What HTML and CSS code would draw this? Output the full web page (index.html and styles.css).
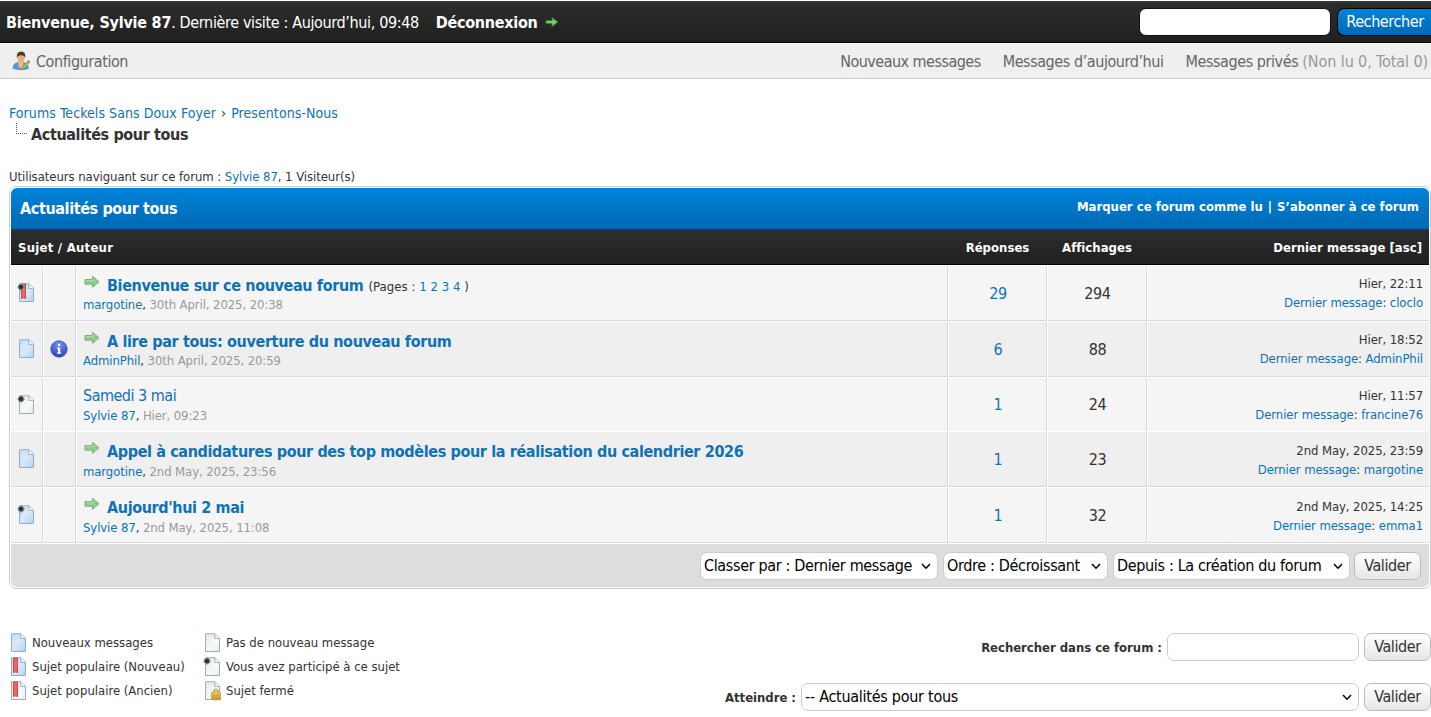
FILE: index.html
```
<!DOCTYPE html>
<html lang="fr">
<head>
<meta charset="utf-8">
<title>Actualités pour tous</title>
<link rel="stylesheet" href="styles.css">
</head>
<body>
<svg class="defs" width="0" height="0">
  <defs>
    <linearGradient id="gb" x1="0" y1="0" x2="1" y2="1"><stop offset="0" stop-color="#c3dbf5"/><stop offset=".5" stop-color="#d9e9f9"/><stop offset="1" stop-color="#b4d2ef"/></linearGradient>
    <linearGradient id="gw" x1="0" y1="0" x2="1" y2="1"><stop offset="0" stop-color="#dfe8e9"/><stop offset=".6" stop-color="#f8fbfb"/><stop offset="1" stop-color="#e3ebea"/></linearGradient>
    <radialGradient id="gi" cx=".5" cy=".2" r=".8"><stop offset="0" stop-color="#7b93ec"/><stop offset="1" stop-color="#2343bd"/></radialGradient>
    <linearGradient id="gl" x1="0" y1="0" x2="0" y2="1"><stop offset="0" stop-color="#f3cf6a"/><stop offset="1" stop-color="#cf9729"/></linearGradient>
    <symbol id="page" viewBox="0 0 18 20"><path d="M2.500 .8H12L16.500 5.200V18.500H2.500Z" stroke-width="1"/><path d="M11.800 1V5.400H16.300" stroke-width="1" fill="#fff"/></symbol>
    <symbol id="mark" viewBox="0 0 18 20"><path d="M4.500 1H8.500V15.500L6.500 14.800L4.500 15.500Z" fill="#e86a68" stroke="#cf4548"/></symbol>
    <symbol id="dot" viewBox="0 0 18 20"><circle cx="4" cy="4" r="2.900" fill="#333"/><path d="M4 .3V7.700M.3 4H7.700" stroke="#333" stroke-opacity=".45"/></symbol>
    <symbol id="lock" viewBox="0 0 18 20"><path d="M11 12V10.500Q11 8.500 13 8.500T15 10.500V12" fill="none" stroke="#c79a3e" stroke-width="1.300"/><rect x="8.500" y="11" width="9.200" height="7.800" rx=".6" fill="url(#gl)" stroke="#c08f32" stroke-width=".7"/><path d="M10 14H17M10 16.300H17" stroke="#b88a35" stroke-width=".6"/></symbol>
    <symbol id="arrow" viewBox="0 0 16 14"><path d="M1 4.500H8.500V1.300L15 6.800L8.500 12.300V9.200H1Z" fill="#92ca91" stroke="#70aa73" stroke-width=".9" stroke-linejoin="round"/><path d="M2 5.600H9.500V3.500" fill="none" stroke="#b5deb2"/></symbol>
  </defs>
</svg>

<header class="topbar">
  <div class="welcome"><b>Bienvenue, Sylvie 87</b><span class="visit">. Dernière visite : Aujourd’hui, 09:48</span><b class="logout">Déconnexion</b><svg class="go" viewBox="0 0 14 12"><path d="M1 4.500H7V1.500L13 6L7 10.500V7.500H1Z" fill="#7cc86b" stroke="#2f7a37"/></svg></div>
  <div class="quick"><input class="field dark" type="text" aria-label="Recherche"><button class="btn blue">Rechercher</button></div>
</header>
<nav class="panel">
  <svg class="user" viewBox="0 0 18 20"><path d="M.5 17.500Q.5 12 5.500 11.500H11Q15 12 16 17.500Q9 20 .5 17.500Z" fill="#6296d8" stroke="#4779b9" stroke-width=".6"/><path d="M6 10.500H11L10.500 15L8.500 18L6 14.500Z" fill="#edbb7c"/><ellipse cx="8.500" cy="7" rx="3.700" ry="4.700" fill="#e7b073"/><path d="M4.300 7Q3.800 .6 8.600 .6T12.800 7L11.500 5Q8.500 3.500 5.700 5Z" fill="#4d3830"/><path d="M15.700 9.500L17.400 11L11.500 18L9.300 18.700L9.800 16.500Z" fill="#a8cb51" stroke="#68883a" stroke-width=".6"/><path d="M15.700 9.300L17.500 10.900L16.500 12L14.700 10.500Z" fill="#db665a"/></svg>
  <span class="config">Configuration</span>
  <div class="links"><span class="fresh">Nouveaux messages</span><span>Messages d’aujourd’hui</span><span>Messages privés <i>(Non lu 0, Total 0)</i></span></div>
</nav>

<main>
  <div class="crumbs"><a>Forums Teckels Sans Doux Foyer</a><span>›</span><a>Presentons-Nous</a></div>
  <div class="current"><span class="branch"></span>Actualités pour tous</div>
  <div class="online">Utilisateurs naviguant sur ce forum : <a>Sylvie 87</a>, 1 Visiteur(s)</div>

  <section class="board">
    <div class="head"><h1>Actualités pour tous</h1><div>Marquer ce forum comme lu<span>|</span>S’abonner à ce forum</div></div>
    <div class="row cols"><div class="subject">Sujet / Auteur</div><div>Réponses</div><div>Affichages</div><div class="last">Dernier message [asc]</div></div>

    <div class="row">
      <div class="ic"><svg class="doc b"><use href="#page"/><use href="#mark"/><use href="#dot"/></svg></div><div></div>
      <div class="topic"><p><svg class="arr"><use href="#arrow"/></svg><b>Bienvenue sur ce nouveau forum</b><small>(Pages : <a>1</a> <a>2</a> <a>3</a> <a>4</a> )</small></p><em><a>margotine</a>, <i>30th April, 2025, 20:38</i></em></div>
      <div class="num"><a>29</a></div><div class="num">294</div>
      <div class="post">Hier, 22:11<br><a>Dernier message</a>: <a>cloclo</a></div>
    </div>
    <div class="row alt">
      <div class="ic"><svg class="doc b"><use href="#page"/></svg></div>
      <div class="ic"><svg class="info" viewBox="0 0 18 18"><circle cx="9" cy="9" r="8.200" fill="url(#gi)" stroke="#3450b8" stroke-width=".8"/><path d="M8 4H10.200V6H8ZM7 7.500H10.200V12.500H11.200V13.800H7V12.500H8V8.800H7Z" fill="#fff"/></svg></div>
      <div class="topic"><p><svg class="arr"><use href="#arrow"/></svg><b>A lire par tous: ouverture du nouveau forum</b></p><em><a>AdminPhil</a>, <i>30th April, 2025, 20:59</i></em></div>
      <div class="num"><a>6</a></div><div class="num">88</div>
      <div class="post">Hier, 18:52<br><a>Dernier message</a>: <a>AdminPhil</a></div>
    </div>
    <div class="row short">
      <div class="ic"><svg class="doc w"><use href="#page"/><use href="#dot"/></svg></div><div></div>
      <div class="topic"><p><a>Samedi 3 mai</a></p><em><a>Sylvie 87</a>, <i>Hier, 09:23</i></em></div>
      <div class="num"><a>1</a></div><div class="num">24</div>
      <div class="post">Hier, 11:57<br><a>Dernier message</a>: <a>francine76</a></div>
    </div>
    <div class="row alt low">
      <div class="ic"><svg class="doc b"><use href="#page"/></svg></div><div></div>
      <div class="topic"><p><svg class="arr"><use href="#arrow"/></svg><b>Appel à candidatures pour des top modèles pour la réalisation du calendrier 2026</b></p><em><a>margotine</a>, <i>2nd May, 2025, 23:56</i></em></div>
      <div class="num"><a>1</a></div><div class="num">23</div>
      <div class="post">2nd May, 2025, 23:59<br><a>Dernier message</a>: <a>margotine</a></div>
    </div>
    <div class="row low">
      <div class="ic"><svg class="doc b"><use href="#page"/><use href="#dot"/></svg></div><div></div>
      <div class="topic"><p><svg class="arr"><use href="#arrow"/></svg><b>Aujourd'hui 2 mai</b></p><em><a>Sylvie 87</a>, <i>2nd May, 2025, 11:08</i></em></div>
      <div class="num"><a>1</a></div><div class="num">32</div>
      <div class="post">2nd May, 2025, 14:25<br><a>Dernier message</a>: <a>emma1</a></div>
    </div>

    <div class="foot">
      <div class="select sort">Classer par : Dernier message<svg viewBox="0 0 10 7"><path d="M1 1L5 5.200L9 1"/></svg></div>
      <div class="select order">Ordre : Décroissant<svg viewBox="0 0 10 7"><path d="M1 1L5 5.200L9 1"/></svg></div>
      <div class="select since">Depuis : La création du forum<svg viewBox="0 0 10 7"><path d="M1 1L5 5.200L9 1"/></svg></div>
      <button class="btn">Valider</button>
    </div>
  </section>

  <section class="bottom">
    <div class="legend">
      <span><svg class="doc b"><use href="#page"/></svg>Nouveaux messages</span>
      <span><svg class="doc w"><use href="#page"/></svg>Pas de nouveau message</span>
      <span><svg class="doc b"><use href="#page"/><use href="#mark"/></svg>Sujet populaire (Nouveau)</span>
      <span><svg class="doc w"><use href="#page"/><use href="#dot"/></svg>Vous avez participé à ce sujet</span>
      <span><svg class="doc w"><use href="#page"/><use href="#mark"/></svg>Sujet populaire (Ancien)</span>
      <span><svg class="doc w"><use href="#page"/><use href="#lock"/></svg>Sujet fermé</span>
    </div>
    <div class="tools">
      <div class="tool"><b>Rechercher dans ce forum :</b><input class="field" type="text" aria-label="Rechercher dans ce forum"><button class="btn">Valider</button></div>
      <div class="tool"><b>Atteindre :</b><div class="select jump">-- Actualités pour tous<svg viewBox="0 0 10 7"><path d="M1 1L5 5.200L9 1"/></svg></div><button class="btn">Valider</button></div>
    </div>
  </section>
</main>
</body>
</html>
```
FILE: styles.css
```
* { box-sizing: border-box; }
html { overflow: hidden; }
body {
  margin: 0;
  width: 1431px;
  height: 717px;
  overflow: hidden;
  background: #fff;
  color: #333;
  font: 13px/20px "DejaVu Sans Condensed", "DejaVu Sans", sans-serif;
  font-stretch: condensed;
  letter-spacing: -0.06px;
}
a { color: #0f72b5; }
i, em { font-style: normal; }
.defs { display: block; position: absolute; }

.topbar {
  display: flex;
  justify-content: space-between;
  height: 43px;
  padding: 0 0 0 6px;
  border-top: 1px solid #fff;
  border-bottom: 1px solid #000;
  background: linear-gradient(#2f3a35 0, #2f3a35 1px, #2d2d2d 2px, #202020);
  color: #fff;
  font-size: 16px;
  letter-spacing: -0.36px;
}
.welcome { display: flex; line-height: 43px; white-space: pre; }
.welcome b { letter-spacing: -0.22px; }
.welcome .logout { margin-left: 17px; letter-spacing: -0.28px; }
.go { width: 14px; height: 12px; margin: 15px 0 0 7px; }
.quick { display: flex; padding-top: 7px; gap: 6px; }

.field {
  width: 192px;
  height: 28px;
  border: 1px solid #ccc;
  border-radius: 7px;
  background: #fff;
  padding: 0;
}
.field.dark { border-color: #111; }
.btn {
  height: 28px;
  width: 67px;
  padding: 0;
  border: 1px solid #bbb;
  border-radius: 7px;
  background: linear-gradient(#fff, #e6e6e6);
  color: #333;
  font: inherit;
  font-size: 16px;
  line-height: 26px;
  letter-spacing: -0.4px;
}
.btn.blue {
  width: 94px;
  padding-left: 1px;
  border-color: #000;
  border-right: 0;
  border-radius: 7px 0 0 7px;
  background: linear-gradient(#0083d9, #0068b3);
  color: #fff;
}

.panel {
  display: flex;
  height: 36px;
  padding: 0 3px 0 12px;
  border-top: 1px solid #fff;
  border-bottom: 1px solid #ccc;
  background: #efefef;
  color: #666;
  font-size: 16px;
  line-height: 35px;
  letter-spacing: -0.43px;
}
.user { width: 19px; height: 20px; margin-top: 7px; }
.config { margin-left: 5px; }
.links { display: flex; gap: 22px; margin-left: auto; }
.links .fresh { letter-spacing: -0.52px; }
.links i { color: #999; letter-spacing: -0.1px; }

main { padding-left: 9px; }
.crumbs { margin-top: 24px; font-size: 14px; letter-spacing: 0.07px; }
.crumbs span { margin: 0 5px; }
.current {
  display: flex;
  height: 22px;
  padding-left: 7px;
  font-size: 16px;
  font-weight: bold;
  letter-spacing: -0.38px;
  line-height: 23px;
}
.branch {
  width: 11px;
  height: 11px;
  margin-right: 4px;
  border-left: 1px dotted #555;
  border-bottom: 1px dotted #555;
}
.online { height: 20px; margin-top: 22px; }

.board {
  width: 1422px;
  height: 403px;
  margin-top: -1px;
  padding: 1px;
  border: 1px solid #ccc;
  border-radius: 7px;
  font-size: 13px;
}
.head {
  display: flex;
  justify-content: space-between;
  height: 42px;
  padding: 0 10px 0 9px;
  border-bottom: 1px solid #263c30;
  border-radius: 6px 6px 0 0;
  background: linear-gradient(#0083d9, #0068b3);
  color: #fff;
  font-weight: bold;
  line-height: 37px;
  letter-spacing: 0;
}
.head span { margin: 0 5px; }
.head h1 { margin: 0; font-size: 16px; line-height: 41px; letter-spacing: -0.38px; }
.row {
  display: grid;
  grid-template-columns: 32px 33px 872px 99px 100px 1fr;
  height: 56px;
}
.short { height: 54px; }
.row > div {
  border: 1px solid #fff;
  border-width: 1px 0 0 1px;
  box-shadow: inset -1px -1px #d8d8d8;
  background: #f5f5f5;
}
.row > div:first-child { border-left: 0; }
.row > div:last-child { box-shadow: inset 0 -1px #d8d8d8; }
.row.alt > div { background: #efefef; }
.row.cols {
  height: 35px;
  grid-template-columns: 937px 99px 100px 1fr;
  border-bottom: 1px solid #000;
  background: linear-gradient(#2e2e2e, #202020);
  color: #fff;
  font-weight: bold;
  line-height: 35px;
  letter-spacing: 0.02px;
  text-align: center;
}
.row.cols > div { border: 0; background: none; box-shadow: none; }
.row.cols .subject { padding-left: 7px; text-align: left; letter-spacing: 0.25px; }
.row.cols .last { padding-right: 7px; text-align: right; }

.doc { width: 18px; height: 20px; flex: none; }
.doc.b { fill: url(#gb); stroke: #93adc7; }
.doc.w { fill: url(#gw); stroke: #a3acab; }
.ic { padding: 17px 0 0 6px; }
.row .ic + .ic { padding-left: 6px; }
.info { width: 18px; height: 18px; display: block; margin-top: 1px; }
.topic { padding: 8px 0 0 6px; }
.topic p {
  display: flex;
  height: 23px;
  margin: 0;
  font-size: 16px;
  line-height: 23px;
  letter-spacing: -0.5px;
}
.topic b { color: #0f72b5; letter-spacing: -0.37px; white-space: nowrap; }
.topic small { margin-left: 5px; font-size: 13px; line-height: 25px; letter-spacing: 0.05px; }
.topic em { display: block; line-height: 15px; letter-spacing: -0.1px; }
.topic i { color: #999; }
.short .topic { padding-top: 6px; }
.short .topic em, .low .topic em { line-height: 17px; }
.arr { width: 16px; height: 14px; margin: 1px 7px 0 1px; }
.num { font-size: 16px; line-height: 55px; letter-spacing: -0.4px; text-align: center; }
.short .num { line-height: 54px; }
.post { padding: 8px 6px 0 0; line-height: 19px; text-align: right; letter-spacing: -0.09px; }
.low .post { padding-top: 9px; }

.foot {
  display: flex;
  justify-content: flex-end;
  height: 44px;
  padding: 8px 8px 0 0;
  border-top: 1px solid #fff;
  border-radius: 0 0 6px 6px;
  background: #ddd;
}
.select {
  display: flex;
  justify-content: space-between;
  height: 28px;
  padding: 0 6px 0 3px;
  border: 1px solid #ccc;
  border-radius: 7px;
  background: #fff;
  color: #000;
  font-size: 16px;
  line-height: 26px;
  letter-spacing: -0.34px;
  white-space: nowrap;
}
.select svg { width: 10px; height: 7px; margin-top: 10px; fill: none; stroke: #000; stroke-width: 1.5; }
.sort { width: 238px; margin-right: 5px; }
.order { width: 165px; margin-right: 5px; }
.since { width: 237px; margin-right: 4px; }
.jump { width: 558px; letter-spacing: -0.27px; }

.bottom { display: flex; justify-content: space-between; padding-top: 44px; }
.legend {
  display: grid;
  grid-template-columns: 194px 220px;
  grid-auto-rows: 24px;
}
.legend span { display: flex; line-height: 20px; letter-spacing: -0.02px; }
.legend .doc { margin-right: 5px; }
.tool { display: flex; justify-content: flex-end; height: 28px; margin-bottom: 22px; }
.tool b { margin-right: 5px; line-height: 30px; letter-spacing: -0.03px; }
.tool .btn { margin-left: 5px; }
```
